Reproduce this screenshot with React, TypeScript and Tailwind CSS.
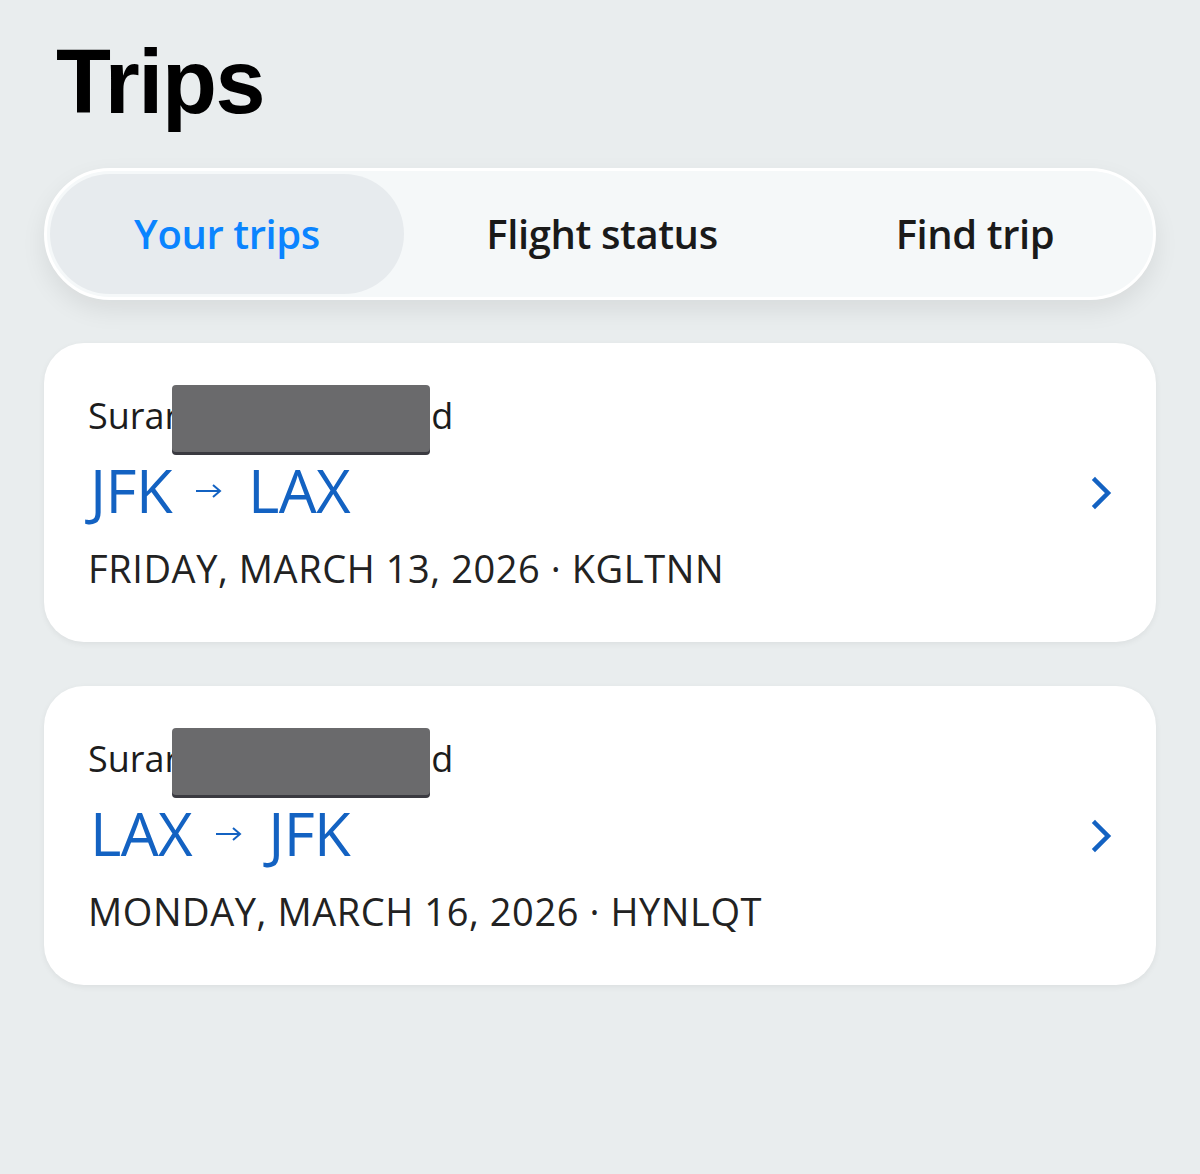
import React from 'react';

const trips = [
  { from: 'JFK', to: 'LAX', date: 'FRIDAY, MARCH 13, 2026', code: 'KGLTNN' },
  { from: 'LAX', to: 'JFK', date: 'MONDAY, MARCH 16, 2026', code: 'HYNLQT' },
];

function TripCard({ trip }: { trip: (typeof trips)[number] }) {
  return (
    <div className="flex justify-between rounded-[40px] bg-white pl-[44px] pr-[42px] pt-[51px] h-[299px] shadow-[0_2px_6px_rgba(0,0,0,0.06)]">
      <div className="flex flex-col">
        <p className="relative text-[36px] leading-[44px] text-[#1c1c1c]">
          Surar
          <span className="inline-block w-[252px]" />d
          <span className="absolute left-[84px] top-[-9px] w-[258px] h-[67px] rounded-[4px] bg-[#6a6a6c] shadow-[0_3px_0_#3a3a40]" />
        </p>
        <p className="mt-[14px] flex items-center text-[60px] leading-[76px] text-[#1362c2] tracking-[-0.01em]">
          <span className="ml-[2px]">{trip.from}</span>
          <svg className="ml-[22px] mr-[24px] mt-[2px]" width="30" height="18" viewBox="0 0 30 18" fill="none" stroke="#1362c2" strokeWidth="2">
            <path d="M2 9h24M19 3l7 6-7 6" />
          </svg>
          <span>{trip.to}</span>
        </p>
        <p className="mt-[18px] text-[38px] leading-[44px] text-[#222] tracking-[0.015em]">
          {trip.date} · {trip.code}
        </p>
      </div>
      <svg className="self-center mt-[-51px]" width="24" height="34" viewBox="0 0 24 34" fill="none" stroke="#1362c2" strokeWidth="4.5" strokeLinecap="square">
        <path d="M5 4l13 13L5 30" />
      </svg>
    </div>
  );
}

export default function App() {
  return (
    <div
      className="min-h-[1174px] w-[1200px] bg-[#e9edee] px-[44px] pt-[30px]"
      style={{ fontFamily: '"Open Sans", "Noto Sans", sans-serif' }}
    >
      <h1
        className="ml-[12px] text-[90px] leading-[104px] font-bold tracking-[-0.015em] text-black"
        style={{ fontFamily: '"Liberation Sans", Arial, sans-serif' }}
      >
        Trips
      </h1>
      <div className="mt-[34px] flex h-[132px] items-center rounded-full border-[3px] border-white bg-[#f5f8f9] p-[3px] shadow-[0_10px_24px_rgba(0,0,0,0.08)]">
        <div className="flex h-full w-[354px] items-center justify-center rounded-full bg-[#e7ebee]">
          <span className="text-[40px] text-[#0a84ff] font-semibold tracking-[-0.01em]">Your trips</span>
        </div>
        <div className="flex w-[396px] justify-center">
          <span className="text-[40px] text-[#1a1a1a] font-semibold tracking-[-0.01em]">Flight status</span>
        </div>
        <div className="flex flex-1 justify-center">
          <span className="text-[40px] text-[#1a1a1a] font-semibold tracking-[-0.01em]">Find trip</span>
        </div>
      </div>
      <div className="mt-[43px] flex flex-col gap-[44px]">
        {trips.map((t) => (
          <TripCard key={t.code} trip={t} />
        ))}
      </div>
    </div>
  );
}
